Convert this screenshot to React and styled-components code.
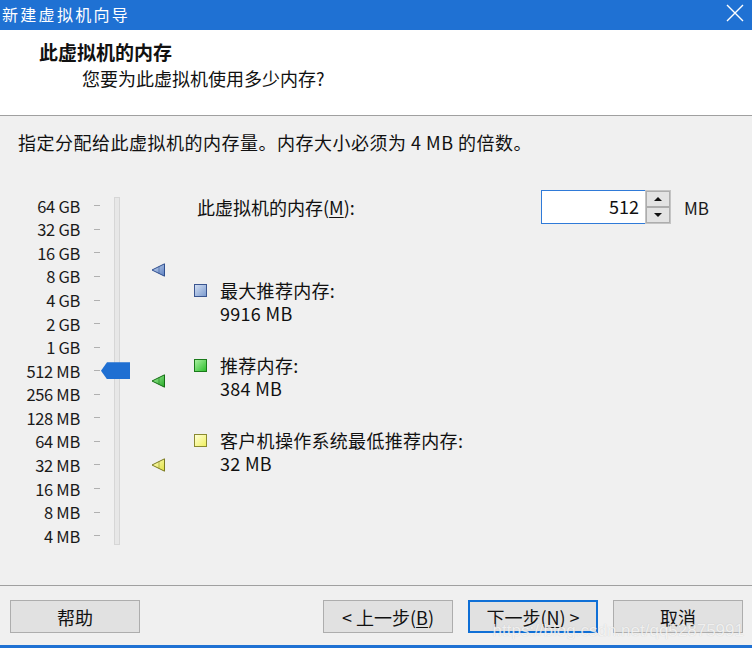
import React from "react"
import styled, { createGlobalStyle } from "styled-components"

const GlobalStyle = createGlobalStyle`
  html, body {
    margin: 0;
    padding: 0;
    background: #f0f0f0;
  }
  body {
    font-family: "Noto Sans CJK SC", "Noto Sans", sans-serif;
    color: #111;
  }
`

const ROW = 23.57
const SCALE = ["64 GB", "32 GB", "16 GB", "8 GB", "4 GB", "2 GB", "1 GB", "512 MB", "256 MB", "128 MB", "64 MB", "32 MB", "16 MB", "8 MB", "4 MB"]

// y centre of a memory value (in MB) on the log2 scale
const rowY = (mb) => ROW / 2 + (16 - Math.log2(mb)) * ROW

const MARKERS = [
  { mb: 9916, from: "#c9d8f0", to: "#5b7fc0", line: "#2f4f8f" },
  { mb: 384, from: "#a6f0a0", to: "#25a825", line: "#156e15" },
  { mb: 32, from: "#ffffc8", to: "#e0e040", line: "#7a7a20" },
]

const LEGEND = [
  { title: "最大推荐内存:", value: "9916 MB", color: "blue", gap: 55 },
  { title: "推荐内存:", value: "384 MB", color: "green", gap: 29 },
  { title: "客户机操作系统最低推荐内存:", value: "32 MB", color: "yellow", gap: 29 },
]

const SWATCH = {
  blue: { bg: "linear-gradient(135deg, #d2def2, #7d9ccf)", line: "#3a5590" },
  green: { bg: "linear-gradient(135deg, #a8f0a0, #2fbf2f)", line: "#1a7a1a" },
  yellow: { bg: "linear-gradient(135deg, #ffffd8, #f0f060)", line: "#8a8a30" },
}

export default function App() {
  return (
    <>
      <GlobalStyle />
      <Window>
        <TitleBar>
          <TitleText>新建虚拟机向导</TitleText>
          <CloseIcon width="18" height="18" viewBox="0 0 18 18">
            <path d="M1 1 L17 17 M17 1 L1 17" stroke="#fff" strokeWidth="1.4" />
          </CloseIcon>
        </TitleBar>

        <Header>
          <HeaderTitle>此虚拟机的内存</HeaderTitle>
          <HeaderSub>您要为此虚拟机使用多少内存?</HeaderSub>
        </Header>

        <Body>
          <Instruction>指定分配给此虚拟机的内存量。内存大小必须为 4 MB 的倍数。</Instruction>

          <Main>
            <Scale>
              <Labels>
                {SCALE.map((s) => (
                  <ScaleRow key={s}>
                    <ScaleLabel>{s}</ScaleLabel>
                    <Tick />
                  </ScaleRow>
                ))}
              </Labels>
              <Track />
              <Handle style={{ top: rowY(512) - 8.5 }} />
            </Scale>

            <Markers>
              {MARKERS.map((m) => (
                <Marker key={m.mb} style={{ top: rowY(m.mb) - 7 }} width="15" height="14" viewBox="0 0 15 14">
                  <defs>
                    <linearGradient id={"g" + m.mb} x1="0" y1="0" x2="1" y2="1">
                      <stop offset="0" stopColor={m.from} />
                      <stop offset="1" stopColor={m.to} />
                    </linearGradient>
                  </defs>
                  <polygon points="1,7 13.5,0.8 13.5,13.2" fill={`url(#g${m.mb})`} stroke={m.line} strokeWidth="1" />
                  <line x1="8" y1="3.5" x2="8" y2="10.5" stroke={m.line} strokeWidth="0.8" opacity="0.6" />
                </Marker>
              ))}
            </Markers>

            <Panel>
              <MemRow>
                <MemLabel>此虚拟机的内存(<u>M</u>):</MemLabel>
                <Spin>
                  <SpinInput>512</SpinInput>
                  <SpinButtons>
                    <SpinButton><Arrow $up /></SpinButton>
                    <SpinButton><Arrow /></SpinButton>
                  </SpinButtons>
                </Spin>
                <Unit>MB</Unit>
              </MemRow>

              {LEGEND.map((l) => (
                <LegendItem key={l.title} $gap={l.gap}>
                  <Swatch $color={l.color} />
                  <LegendText>
                    <LegendLine>{l.title}</LegendLine>
                    <LegendLine>{l.value}</LegendLine>
                  </LegendText>
                </LegendItem>
              ))}
            </Panel>
          </Main>
        </Body>

        <Footer>
          <Button>帮助</Button>
          <Spacer />
          <Button>&lt; 上一步(<u>B</u>)</Button>
          <Button $primary>下一步(<u>N</u>) &gt;</Button>
          <Button>取消</Button>
          <Watermark>https://blog.csdn.net/qq52875991</Watermark>
        </Footer>
        <BottomBar />
      </Window>
    </>
  )
}

const Window = styled.div`
  width: 752px;
  height: 648px;
  display: flex;
  flex-direction: column;
  background: #f0f0f0;
  overflow: hidden;
`

const TitleBar = styled.div`
  height: 30px;
  background: #1f71d3;
  display: flex;
  align-items: center;
  justify-content: space-between;
  padding: 0 8px 0 2px;
`

const TitleText = styled.div`
  color: #fff;
  font-size: 16px;
  letter-spacing: 2.3px;
  line-height: 30px;
  margin-top: -2px;
`

const CloseIcon = styled.svg`
  margin-top: -4px;
`

const Header = styled.div`
  height: 86px;
  background: #fff;
  border-bottom: 1px solid #a0a0a0;
  padding: 9px 0 0 39px;
  box-sizing: border-box;
`

const HeaderTitle = styled.div`
  font-size: 19px;
  font-weight: 700;
  line-height: 26px;
`

const HeaderSub = styled.div`
  font-size: 18px;
  line-height: 26px;
  margin-left: 43px;
`

const Body = styled.div`
  flex: 1;
  padding: 13px 0 0 18px;
  box-sizing: border-box;
`

const Instruction = styled.div`
  font-size: 18px;
  line-height: 26px;
  letter-spacing: 0.5px;
`

const Main = styled.div`
  display: flex;
  align-items: flex-start;
  margin-top: 35px;
`

const Scale = styled.div`
  position: relative;
  display: flex;
  margin-top: 4px;
`

const Labels = styled.div`
  display: flex;
  flex-direction: column;
`

const ScaleRow = styled.div`
  height: ${ROW}px;
  display: flex;
  align-items: center;
`

const ScaleLabel = styled.div`
  width: 62px;
  text-align: right;
  font-size: 16.5px;
  letter-spacing: -0.3px;
  color: #1a1a1a;
`

const Tick = styled.div`
  width: 6px;
  height: 1px;
  margin-left: 14px;
  background: #b0b0b0;
`

const Track = styled.div`
  width: 4px;
  height: 346px;
  margin: 3px 0 0 14px;
  background: #e7e7e7;
  border: 1px solid #d6d6d6;
`

const Handle = styled.div`
  position: absolute;
  left: 83px;
  width: 29px;
  height: 17px;
  background: #1f6fd2;
  clip-path: polygon(0 50%, 6px 0, 100% 0, 100% 100%, 6px 100%);
`

const Markers = styled.div`
  position: relative;
  width: 15px;
  height: 350px;
  margin: 4px 0 0 31px;
`

const Marker = styled.svg`
  position: absolute;
  left: 0;
`

const Panel = styled.div`
  margin-left: 28px;
  display: flex;
  flex-direction: column;
`

const MemRow = styled.div`
  display: flex;
  align-items: center;
  height: 34px;
`

const MemLabel = styled.div`
  width: 344px;
  padding-left: 3px;
  font-size: 18px;
  line-height: 24px;

  u {
    text-underline-offset: 2px;
  }
`

const Spin = styled.div`
  display: flex;
  height: 34px;
`

const SpinInput = styled.div`
  width: 104px;
  height: 34px;
  box-sizing: border-box;
  border: 1px solid #2f7ad8;
  border-right: none;
  background: #fff;
  text-align: right;
  padding-right: 6px;
  font-size: 18px;
  line-height: 31px;
`

const SpinButtons = styled.div`
  width: 26px;
  display: flex;
  flex-direction: column;
  border: 1px solid #c4c4c4;
  box-sizing: border-box;
`

const SpinButton = styled.div`
  flex: 1;
  background: #e3e3e3;
  border: 1px solid #adadad;
  display: flex;
  align-items: center;
  justify-content: center;
`

const Arrow = styled.div`
  width: 0;
  height: 0;
  border-left: 4px solid transparent;
  border-right: 4px solid transparent;
  ${(p) => (p.$up ? "border-bottom: 4px solid #111;" : "border-top: 4px solid #111;")}
`

const Unit = styled.div`
  margin-left: 13px;
  font-size: 17px;
  color: #1a1a1a;
`

const LegendItem = styled.div`
  display: flex;
  align-items: flex-start;
  margin-top: ${(p) => p.$gap}px;
`

const Swatch = styled.div`
  width: 13px;
  height: 13px;
  box-sizing: border-box;
  margin-top: 5px;
  background: ${(p) => SWATCH[p.$color].bg};
  border: 1.5px solid ${(p) => SWATCH[p.$color].line};
`

const LegendText = styled.div`
  margin-left: 13px;
  display: flex;
  flex-direction: column;
`

const LegendLine = styled.div`
  font-size: 18px;
  line-height: 23px;
  letter-spacing: 0.3px;
`

const Footer = styled.div`
  position: relative;
  height: 60px;
  border-top: 1px solid #a0a0a0;
  display: flex;
  align-items: flex-start;
  gap: 15px;
  padding: 14px 9px 0 10px;
  box-sizing: border-box;
`

const Spacer = styled.div`
  flex: 1;
`

const Button = styled.div`
  width: 130px;
  height: 33px;
  box-sizing: border-box;
  background: #e1e1e1;
  border: ${(p) => (p.$primary ? "2px solid #0f6fd6" : "1px solid #adadad")};
  display: flex;
  align-items: center;
  justify-content: center;
  font-size: 18px;
  white-space: pre;

  u {
    text-underline-offset: 2px;
  }
`

const Watermark = styled.div`
  position: absolute;
  right: 8px;
  top: 36px;
  font-family: "Liberation Sans", Arial, sans-serif;
  font-size: 17px;
  line-height: 18px;
  color: rgba(255, 255, 255, 0.75);
  text-shadow: 0 0 1px rgba(120, 120, 120, 0.35);
  pointer-events: none;
`

const BottomBar = styled.div`
  height: 3px;
  background: #1f71d3;
`
